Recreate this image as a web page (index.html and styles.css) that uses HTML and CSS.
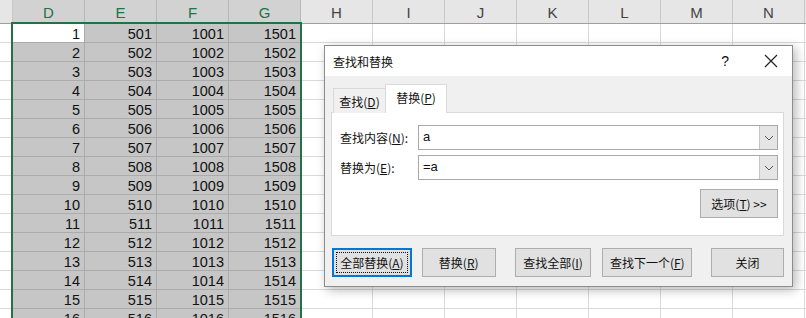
FILE: index.html
```html
<!DOCTYPE html>
<html lang="zh-CN">
<head>
    <meta charset="UTF-8">
    <title>查找和替换</title>
    <link rel="stylesheet" href="styles.css">
</head>
<body>
    <!-- 工作表 -->
    <div class="sheet">
        <table class="grid">
            <colgroup>
                <col class="col-edge">
                <col span="12" class="col">
            </colgroup>
            <thead>
                <tr>
                    <th></th>
                    <th class="hsel">D</th><th class="hsel">E</th><th class="hsel">F</th><th class="hsel">G</th>
                    <th>H</th><th>I</th><th>J</th><th>K</th><th>L</th><th>M</th><th>N</th><th></th>
                </tr>
            </thead>
            <tbody>
                <tr><td></td><td class="act">1</td><td class="s">501</td><td class="s">1001</td><td class="s">1501</td><td></td><td></td><td></td><td></td><td></td><td></td><td></td><td></td></tr>
                <tr><td></td><td class="s">2</td><td class="s">502</td><td class="s">1002</td><td class="s">1502</td><td></td><td></td><td></td><td></td><td></td><td></td><td></td><td></td></tr>
                <tr><td></td><td class="s">3</td><td class="s">503</td><td class="s">1003</td><td class="s">1503</td><td></td><td></td><td></td><td></td><td></td><td></td><td></td><td></td></tr>
                <tr><td></td><td class="s">4</td><td class="s">504</td><td class="s">1004</td><td class="s">1504</td><td></td><td></td><td></td><td></td><td></td><td></td><td></td><td></td></tr>
                <tr><td></td><td class="s">5</td><td class="s">505</td><td class="s">1005</td><td class="s">1505</td><td></td><td></td><td></td><td></td><td></td><td></td><td></td><td></td></tr>
                <tr><td></td><td class="s">6</td><td class="s">506</td><td class="s">1006</td><td class="s">1506</td><td></td><td></td><td></td><td></td><td></td><td></td><td></td><td></td></tr>
                <tr><td></td><td class="s">7</td><td class="s">507</td><td class="s">1007</td><td class="s">1507</td><td></td><td></td><td></td><td></td><td></td><td></td><td></td><td></td></tr>
                <tr><td></td><td class="s">8</td><td class="s">508</td><td class="s">1008</td><td class="s">1508</td><td></td><td></td><td></td><td></td><td></td><td></td><td></td><td></td></tr>
                <tr><td></td><td class="s">9</td><td class="s">509</td><td class="s">1009</td><td class="s">1509</td><td></td><td></td><td></td><td></td><td></td><td></td><td></td><td></td></tr>
                <tr><td></td><td class="s">10</td><td class="s">510</td><td class="s">1010</td><td class="s">1510</td><td></td><td></td><td></td><td></td><td></td><td></td><td></td><td></td></tr>
                <tr><td></td><td class="s">11</td><td class="s">511</td><td class="s">1011</td><td class="s">1511</td><td></td><td></td><td></td><td></td><td></td><td></td><td></td><td></td></tr>
                <tr><td></td><td class="s">12</td><td class="s">512</td><td class="s">1012</td><td class="s">1512</td><td></td><td></td><td></td><td></td><td></td><td></td><td></td><td></td></tr>
                <tr><td></td><td class="s">13</td><td class="s">513</td><td class="s">1013</td><td class="s">1513</td><td></td><td></td><td></td><td></td><td></td><td></td><td></td><td></td></tr>
                <tr><td></td><td class="s">14</td><td class="s">514</td><td class="s">1014</td><td class="s">1514</td><td></td><td></td><td></td><td></td><td></td><td></td><td></td><td></td></tr>
                <tr><td></td><td class="s">15</td><td class="s">515</td><td class="s">1015</td><td class="s">1515</td><td></td><td></td><td></td><td></td><td></td><td></td><td></td><td></td></tr>
                <tr><td></td><td class="s">16</td><td class="s">516</td><td class="s">1016</td><td class="s">1516</td><td></td><td></td><td></td><td></td><td></td><td></td><td></td><td></td></tr>
            </tbody>
        </table>
        <!-- 选区边框 -->
        <div class="selection"></div>
    </div>

    <!-- 查找和替换对话框 -->
    <div class="dialog">
        <div class="titlebar">
            <span class="title">查找和替换</span>
            <span class="help">?</span>
            <svg class="close" width="14" height="14" viewBox="0 0 14 14">
                <path d="M1 1 L13 13 M13 1 L1 13" stroke="#222" stroke-width="1.2" fill="none"/>
            </svg>
        </div>
        <div class="body">
            <div class="tabs">
                <div class="tab">查找(<u>D</u>)</div>
                <div class="tab active">替换(<u>P</u>)</div>
            </div>
            <div class="panel">
                <div class="field">
                    <label>查找内容(<u>N</u>):</label>
                    <div class="combo">
                        <span class="value">a</span>
                        <span class="drop">
                            <svg width="10" height="6" viewBox="0 0 10 6"><path d="M1 1 L5 5 L9 1" stroke="#555" fill="none"/></svg>
                        </span>
                    </div>
                </div>
                <div class="field">
                    <label>替换为(<u>E</u>):</label>
                    <div class="combo">
                        <span class="value">=a</span>
                        <span class="drop">
                            <svg width="10" height="6" viewBox="0 0 10 6"><path d="M1 1 L5 5 L9 1" stroke="#555" fill="none"/></svg>
                        </span>
                    </div>
                </div>
                <div class="options-row">
                    <button class="btn btn-options">选项(<u>T</u>) &gt;&gt;</button>
                </div>
            </div>
            <div class="actions">
                <button class="btn btn-focus"><span>全部替换(<u>A</u>)</span></button>
                <button class="btn btn-replace">替换(<u>R</u>)</button>
                <button class="btn btn-findall">查找全部(<u>I</u>)</button>
                <button class="btn btn-next">查找下一个(<u>F</u>)</button>
                <button class="btn btn-close">关闭</button>
            </div>
        </div>
    </div>
</body>
</html>
```

FILE: styles.css
```css
body {
    margin: 0;
    padding: 0;
    overflow: hidden;
    background-color: #ffffff;
    font-family: "Noto Sans CJK SC", "Liberation Sans", sans-serif;
}

/* 工作表 */
.sheet {
    position: relative;
    width: 806px;
    height: 318px;
    overflow: hidden;
}

.grid {
    border-collapse: collapse;
    table-layout: fixed;
    width: 877px;
    margin-left: -1px;
    font-family: "Liberation Sans", sans-serif;
}

.col-edge {
    width: 13px;
}

.col {
    width: 72px;
}

.grid th {
    height: 23px;
    padding: 3px 0 0 0;
    background-color: #e6e6e6;
    color: #444;
    font-weight: normal;
    font-size: 15px;
    text-align: center;
    border: 1px solid #c8c8c8;
    border-top: none;
    border-bottom: 1px solid #9f9f9f;
    box-sizing: border-box;
}

.grid th.hsel {
    background-color: #d2d2d2;
    color: #217346;
    border-color: #b8b8b8;
    border-bottom: 2px solid #217346;
}

.grid td {
    height: 19px;
    padding: 2px 4px 0 0;
    border: 1px solid #d9d9d9;
    font-size: 14.5px;
    line-height: 16px;
    text-align: right;
    color: #111;
    box-sizing: border-box;
}

.grid td.s {
    background-color: #c6c6c6;
    border-color: #ababab;
}

.grid td.act {
    background-color: #ffffff;
    border-color: #ababab;
}

.selection {
    position: absolute;
    left: 11px;
    top: 22px;
    width: 287px;
    height: 320px;
    border: 2px solid #217346;
}

/* 对话框 */
.dialog {
    position: absolute;
    left: 324px;
    top: 45px;
    width: 467px;
    height: 240px;
    border: 1px solid #8c8c8c;
    background-color: #f0f0f0;
    box-shadow: 3px 3px 10px rgba(0, 0, 0, 0.28);
    font-size: 12px;
    color: #111;
}

.titlebar {
    display: flex;
    align-items: center;
    height: 30px;
    padding: 0 14px 0 8px;
    background-color: #ffffff;
}

.title {
    flex: 1;
    font-size: 12px;
}

.help {
    font-family: "Liberation Sans", sans-serif;
    font-size: 14px;
    margin-right: 35px;
}

.close {
    display: block;
}

.body {
    padding: 8px 8px 0 6px;
}

.tabs {
    display: flex;
    align-items: flex-end;
    height: 29px;
    margin-bottom: -1px;
    padding-left: 2px;
}

.tab {
    height: 25px;
    width: 53px;
    display: flex;
    align-items: center;
    justify-content: center;
    border: 1px solid #d9d9d9;
    border-bottom: none;
    background-color: #f0f0f0;
    box-sizing: border-box;
    position: relative;
}

.tab.active {
    height: 29px;
    width: 62px;
    margin-left: -1px;
    background-color: #ffffff;
    padding-bottom: 4px;
    z-index: 1;
}

.panel {
    height: 124px;
    border: 1px solid #d9d9d9;
    background-color: #ffffff;
    box-sizing: border-box;
    padding: 12px 5px 0 8px;
}

.field {
    display: flex;
    align-items: center;
    height: 25px;
    margin-bottom: 5px;
}

.field label {
    width: 78px;
}

.combo {
    flex: 1;
    display: flex;
    height: 25px;
    border: 1px solid #a8a8a8;
    box-sizing: border-box;
}

.value {
    flex: 1;
    padding-left: 4px;
    line-height: 22px;
    font-size: 13px;
    font-family: "Liberation Sans", sans-serif;
}

.drop {
    width: 17px;
    display: flex;
    align-items: center;
    justify-content: center;
    background-color: #e5e5e5;
    border-left: 1px solid #c4c4c4;
}

.options-row {
    display: flex;
    justify-content: flex-end;
    margin-top: 9px;
}

.btn {
    height: 29px;
    padding: 0;
    border: 1px solid #adadad;
    background-color: #e1e1e1;
    font-family: "Noto Sans CJK SC", sans-serif;
    font-size: 12px;
    color: #111;
    box-sizing: border-box;
}

.btn-options {
    width: 78px;
}

.actions {
    display: flex;
    margin-top: 12px;
    padding-left: 1px;
}

.btn-focus {
    width: 80px;
    border: 2px solid #0078d7;
    padding: 2px;
}

.btn-focus span {
    display: flex;
    align-items: center;
    justify-content: center;
    height: 100%;
    border: 1px dotted #111;
    box-sizing: border-box;
}

.btn-replace {
    width: 74px;
    margin-left: 10px;
}

.btn-findall {
    width: 77px;
    margin-left: 19px;
}

.btn-next {
    width: 90px;
    margin-left: 11px;
}

.btn-close {
    width: 73px;
    margin-left: 19px;
}
```
